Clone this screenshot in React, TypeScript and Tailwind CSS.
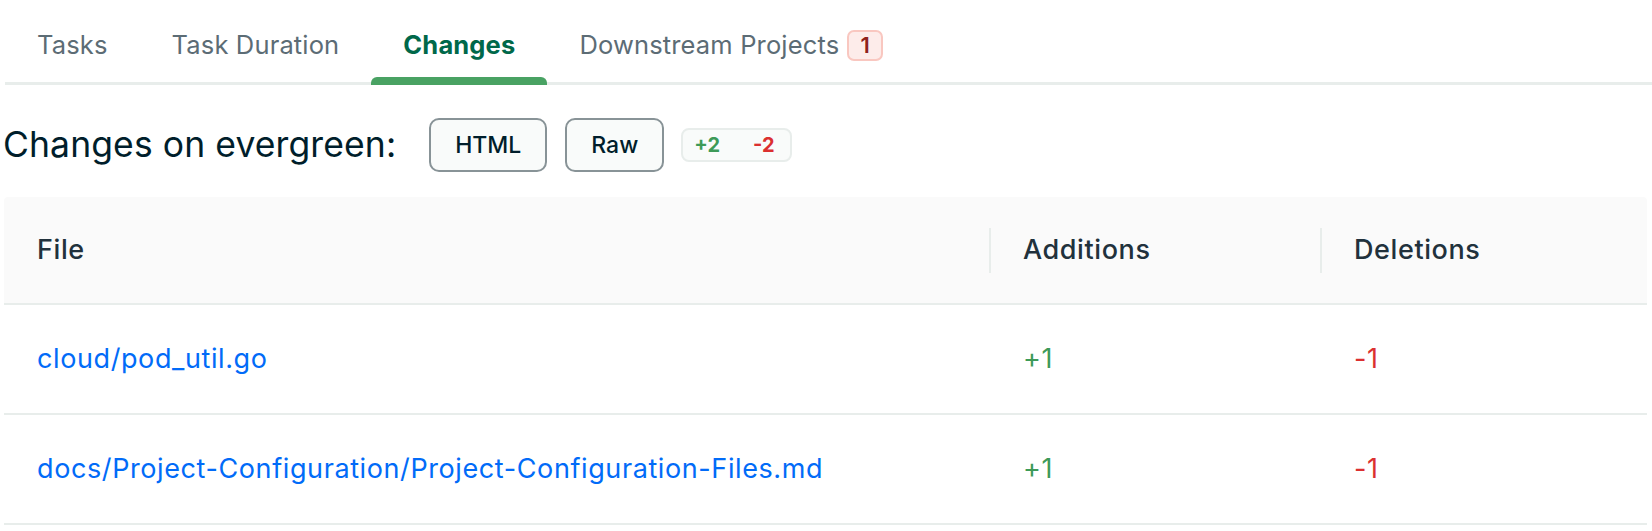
import React from 'react'

const font = { fontFamily: 'Inter, "Open Sans", sans-serif' }

const tabs = [
  { label: 'Tasks' },
  { label: 'Task Duration' },
  { label: 'Changes', active: true },
  { label: 'Downstream Projects', badge: '1' },
]

const rows = [
  { file: 'cloud/pod_util.go', add: '+1', del: '-1' },
  { file: 'docs/Project-Configuration/Project-Configuration-Files.md', add: '+1', del: '-1' },
]

export default function App() {
  return (
    <div className="w-[1652px] h-[531px] bg-white overflow-hidden" style={font}>
      {/* tab bar */}
      <div className="ml-[5px] flex border-b-[3px] border-[#E8EDEB]">
        {tabs.map(t => (
          <div
            key={t.label}
            className={`relative flex h-[82px] items-center gap-[8px] px-[32px] pt-[8px] text-[25.5px] tracking-[0.15px] ${
              t.active ? 'font-bold text-[#00684A]' : 'text-[#5C6C75]'
            }`}
          >
            {t.label}
            {t.badge && (
              <span className="flex h-[31px] w-[36px] items-center justify-center rounded-[7px] border-2 border-[#F9C7C0] bg-[#FDECEA] text-[22px] font-semibold text-[#8F221B]">
                {t.badge}
              </span>
            )}
            {t.active && (
              <span className="absolute bottom-[-3px] left-0 right-0 h-[8px] rounded-t-[6px] bg-[#49A263]" />
            )}
          </div>
        ))}
      </div>

      {/* heading row */}
      <div className="mt-[33px] ml-[3px] flex items-center">
        <h2 className="text-[35.5px] leading-none tracking-[0.1px] text-[#001E2B]">Changes on evergreen:</h2>
        <button className="ml-[33px] h-[54px] w-[118px] rounded-[10px] border-2 border-[#889397] bg-[#F9FBFA] text-[23px] font-medium text-[#001E2B]">
          HTML
        </button>
        <button className="ml-[18px] h-[54px] w-[99px] rounded-[10px] border-2 border-[#889397] bg-[#F9FBFA] text-[23px] font-medium text-[#001E2B]">
          Raw
        </button>
        <div className="ml-[17px] flex h-[34px] w-[111px] items-center gap-[33px] rounded-[8px] border-2 border-[#E8EDEB] bg-[#F9FBFA] pl-[11px] text-[20px] font-bold">
          <span className="text-[#3D9A58]">+2</span>
          <span className="text-[#DB3030]">-2</span>
        </div>
      </div>

      {/* table */}
      <div className="ml-[4px] mt-[25px] w-[1643px] text-[27px] tracking-[0.6px]">
        <div className="flex h-[108px] items-center rounded-t-[4px] border-b-2 border-[#E8EDEB] bg-[#FAFAFA] font-medium text-[#21313C]">
          <div className="w-[985px] pl-[33px]">File</div>
          <div className="flex h-[45px] w-[331px] items-center border-l-2 border-[#E8EDEB] pl-[32px]">Additions</div>
          <div className="flex h-[45px] flex-1 items-center border-l-2 border-[#E8EDEB] pl-[32px]">Deletions</div>
        </div>
        {rows.map(r => (
          <div key={r.file} className="flex h-[110px] items-center border-b-2 border-[#E8EDEB]">
            <div className="w-[985px] pl-[33px] text-[#016BF8]">{r.file}</div>
            <div className="w-[331px] pl-[34px] text-[#3D9A58]">{r.add}</div>
            <div className="flex-1 pl-[34px] text-[#DB3030]">{r.del}</div>
          </div>
        ))}
      </div>
    </div>
  )
}
